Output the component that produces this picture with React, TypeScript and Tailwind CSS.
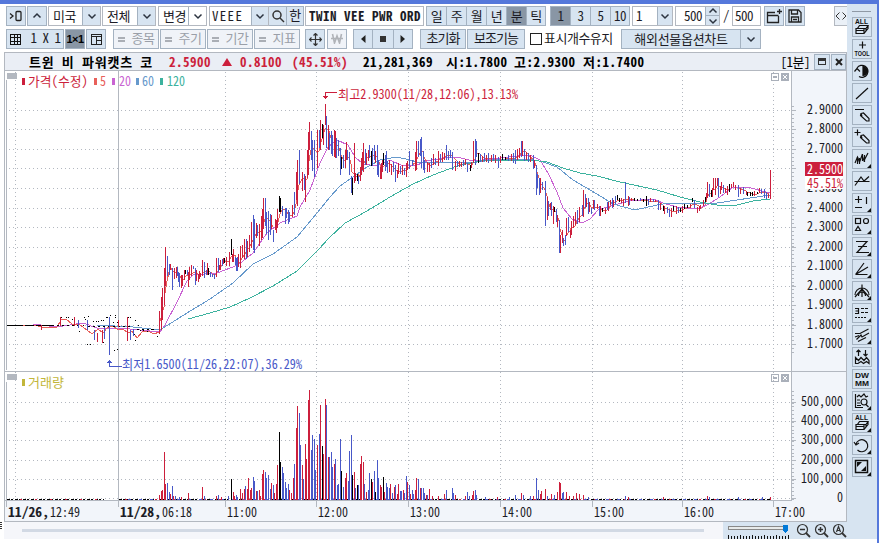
import type { ReactNode } from "react";

const UP = "#cc1f3c";
const DOWN = "#4858c8";
const FLAT = "#000000";
const GRID = "#b3b8c0";

type Tone = "u" | "d" | "f";
const tones: Record<Tone, string> = { u: UP, d: DOWN, f: FLAT };

/* x, high, low, tone (u = up, d = down, f = flat) */
const candleData = `
159 311 334 u,161 297 330 u,162 288 320 u,164 268 305 u,165 247 286 u,167 256 276 d,169 264 275 d,170 264 270 u,172 268 290 d,
174 268 279 u,176 267 278 u,177 267 276 d,178 272 282 d,179 273 287 d,181 275 288 u,182 275 286 u,184 270 280 u,185 270 274 f,
187 270 275 d,188 272 287 u,189 267 280 u,191 265 276 u,193 266 269 d,195 268 285 d,196 270 281 u,198 274 282 u,199 271 279 u,
200 273 277 u,202 260 276 u,204 262 278 d,206 270 275 d,207 263 275 u,208 268 275 f,210 272 277 d,212 274 277 d,214 274 279 d,
216 258 277 u,218 258 272 d,219 265 270 u,220 260 270 u,222 259 266 d,223 258 264 u,224 258 263 f,226 257 266 u,229 252 266 u,
231 239 255 f,232 254 262 u,233 249 262 u,235 257 265 d,236 258 271 d,237 257 271 d,238 254 267 u,240 246 268 u,242 245 258 u,
244 239 259 u,246 239 259 d,247 241 257 u,249 235 252 u,251 222 248 u,253 215 250 d,254 219 253 d,256 223 238 u,257 225 236 d,
259 224 246 u,261 216 240 u,262 209 238 u,263 198 229 u,265 198 226 d,266 212 234 d,268 211 240 d,270 214 235 d,271 215 229 u,
273 230 242 d,275 219 230 u,276 220 233 u,277 209 228 u,279 196 212 f,280 198 212 f,282 206 216 d,285 208 224 d,286 208 218 d,
288 210 224 d,289 212 222 d,292 205 217 u,294 192 215 d,296 172 200 u,297 160 206 u,299 150 184 d,302 172 191 u,304 174 190 d,
305 176 202 u,307 150 178 u,308 132 175 u,309 122 150 u,311 131 160 d,312 140 171 d,314 140 177 d,317 130 168 u,319 130 148 d,
320 120 150 u,322 124 138 f,323 125 145 u,325 104 125 u,326 116 148 d,328 125 150 u,329 133 150 d,331 131 154 d,332 135 156 d,
334 130 157 u,335 131 158 u,336 138 158 d,338 140 156 d,340 148 175 d,341 157 169 f,343 155 168 d,345 150 168 u,346 142 160 u,
347 150 160 d,349 152 175 d,351 176 193 d,352 178 195 f,354 143 183 u,355 173 181 u,357 174 181 f,358 176 184 d,360 167 181 u,
361 158 175 u,362 152 170 u,363 143 172 u,365 149 165 d,366 153 165 u,368 150 161 u,369 145 158 d,371 151 166 f,372 148 166 d,
374 145 160 d,375 151 163 u,377 145 175 d,378 160 177 d,380 167 179 u,381 163 179 u,382 160 172 u,383 153 165 f,385 155 171 d,
386 151 167 d,387 161 173 d,389 160 172 u,391 164 175 u,393 162 172 d,395 165 182 d,397 170 178 u,398 163 174 u,400 166 174 d,
402 165 175 u,404 168 175 d,406 163 177 u,407 161 170 u,409 151 169 d,412 160 166 d,415 152 171 u,416 141 170 u,418 141 157 d,
420 139 156 d,421 137 168 d,423 151 170 d,424 160 173 d,427 162 172 u,429 163 172 u,431 158 168 d,433 154 165 u,435 158 165 d,
438 151 166 u,440 154 162 d,442 152 162 u,444 153 160 u,446 145 160 d,448 151 160 d,450 150 158 d,452 152 170 d,455 161 171 u,
457 161 167 d,459 161 167 u,461 162 167 u,463 160 166 d,465 159 165 u,467 163 172 d,470 165 171 f,471 162 168 u,473 141 163 u,
475 139 165 d,476 141 157 d,478 153 163 f,480 154 162 d,482 156 162 u,484 153 161 d,486 155 162 u,488 153 163 d,491 155 162 u,
493 154 161 d,495 155 163 u,498 157 168 d,500 156 163 u,502 154 160 f,505 157 160 f,508 155 161 d,511 154 161 u,513 153 163 d,
515 150 164 d,517 149 160 u,519 148 158 u,521 141 157 d,522 141 156 u,524 149 161 d,526 152 160 u,528 153 162 d,530 155 162 u,
533 155 169 d,534 160 168 u,536 165 195 d,537 174 188 d,539 178 195 d,540 178 193 u,542 182 190 d,545 181 226 d,547 197 220 u,
548 201 216 d,550 203 210 u,551 202 216 d,553 206 224 u,554 207 212 f,556 209 222 d,557 215 227 u,559 220 253 d,560 235 253 u,
562 230 243 u,563 238 246 d,565 235 245 d,566 218 236 u,568 217 232 d,570 230 238 u,571 221 235 u,573 216 228 u,575 212 225 u,
577 210 224 d,579 207 222 u,582 205 216 d,583 190 217 u,585 194 208 d,586 198 207 u,588 198 214 d,589 202 212 u,591 208 214 d,
593 200 209 u,594 200 210 d,597 204 209 u,599 206 216 d,600 206 216 u,602 208 212 f,605 208 214 u,607 202 210 d,608 202 211 u,
610 200 205 u,612 198 208 d,613 200 207 u,615 196 204 d,617 195 200 f,619 198 202 f,621 198 203 u,623 199 206 u,625 182 203 d,
628 196 206 u,629 197 205 d,631 198 201 u,634 198 201 f,637 199 201 f,640 198 201 d,643 199 202 f,646 196 206 f,648 199 205 d,
650 198 202 u,653 199 202 d,655 200 202 u,658 200 210 d,660 203 210 u,663 206 211 f,664 206 214 u,667 207 213 d,669 209 217 d,
671 208 217 u,673 206 211 f,676 206 214 u,678 207 213 d,680 208 212 f,682 206 213 u,684 204 209 f,687 205 208 f,690 204 208 u,
692 198 202 f,694 200 208 d,697 207 213 u,699 206 211 u,700 205 209 u,703 200 206 u,705 197 202 f,706 193 200 u,707 182 198 u,
709 184 197 d,711 190 197 f,712 188 197 u,713 178 190 u,715 178 195 u,717 178 186 u,718 178 197 d,720 186 194 u,721 182 190 u,
723 185 193 d,725 188 193 u,727 186 195 u,729 184 192 f,731 184 188 u,733 182 187 u,735 185 190 u,738 185 197 d,740 188 194 u,
743 187 194 d,746 191 195 u,747 192 196 f,750 192 196 f,752 192 196 f,754 191 196 u,757 192 194 f,759 188 193 u,761 189 194 d,
764 189 198 d,766 192 199 d,768 194 198 u,770 170 199 u`;

const earlyCandles = `
41 325 330 u,60 317 326 u,74 317 326 u,78 320 328 d,87 320 330 d,94 330 340 d,97 333 342 u,102 330 343 u,104 327 339 d,
109 317 355 d,118 320 327 u,127 317 341 u,130 330 340 d,133 329 336 d`;

/* x, height, tone */
const volumeData = `
159 5 u,161 9 u,162 10 u,164 48 u,165 16 u,167 17 d,169 8 d,170 6 u,172 14 d,173 4 u,175 4 d,179 3 d,181 3 u,188 7 u,202 13 u,
204 4 d,216 4 u,218 5 d,221 3 u,228 4 d,231 21 f,233 8 u,234 4 u,236 5 d,237 3 d,240 11 u,242 7 u,244 11 u,245 14 d,247 11 u,248 22 u,
250 10 u,251 12 u,253 23 d,254 19 d,256 9 u,257 9 d,259 10 u,260 4 u,262 26 u,263 30 u,265 28 d,266 22 d,268 25 d,270 11 d,
271 17 u,273 15 d,274 7 u,276 16 u,277 35 u,279 68 f,280 38 f,282 33 d,283 27 d,285 18 d,286 12 d,288 16 d,289 10 u,291 7 u,
293 22 u,294 36 d,296 72 u,297 94 u,299 87 d,300 55 d,302 35 u,303 21 d,305 56 u,306 41 u,308 100 u,309 110 u,311 50 d,312 65 d,
314 61 d,315 30 d,317 55 u,319 66 d,320 95 u,322 54 f,323 46 u,325 101 u,326 95 d,328 43 u,329 43 d,331 48 d,332 33 d,334 36 u,
335 41 d,337 15 d,338 16 d,340 61 d,341 29 f,343 13 d,345 22 u,346 27 u,348 19 d,349 49 d,351 65 d,352 25 f,354 28 u,355 12 d,
357 15 f,358 15 d,360 36 u,361 44 u,363 38 u,364 16 d,366 8 u,368 10 d,369 27 d,371 21 f,372 18 u,374 29 d,375 8 f,377 40 d,
378 22 d,380 15 u,381 13 u,383 23 f,384 8 u,386 17 d,387 13 d,389 12 d,390 16 u,392 7 d,394 13 u,395 15 d,397 6 u,398 16 u,
400 9 d,401 9 d,403 10 u,404 7 d,406 24 d,407 18 u,409 15 d,410 6 u,412 10 d,413 6 d,415 10 u,416 22 u,418 21 d,420 12 u,
421 12 d,423 12 d,424 7 d,426 5 u,427 5 d,429 11 u,432 4 u,438 4 u,444 6 u,446 10 d,452 12 d,453 7 d,455 5 u,465 4 u,467 8 d,
469 4 d,472 5 u,473 9 u,475 10 d,476 5 d,485 3 d,497 3 u,509 3 d,515 5 d,521 7 u,523 5 d,530 4 d,533 4 u,536 22 d,538 10 d,
540 6 u,541 9 u,545 11 u,547 4 d,551 6 u,554 5 d,557 8 u,559 18 u,560 17 u,562 7 d,563 8 d,566 8 u,569 4 u,573 4 u,576 7 u,
579 6 u,583 5 u,588 3 d,625 4 d,628 3 u,663 3 u,707 4 u,709 3 d,738 3 d,762 3 d,770 3 u`;

const ma20 =
  "33,324 57,327 83,323 97,328 120,328 160,332 165,325 177,302 187,281 193,275 217,273 238,265 253,253 267,233 280,223 297,216 300,207 310,190 320,163 328,147 337,140 348,145 355,157 363,164 377,166 390,160 403,166 417,165 427,161 443,158 457,157 473,161 500,158 527,155 532,156 540,160 548,173 557,192 563,208 572,219 582,223 590,219 598,210 610,206 630,201 653,199 663,203 677,207 697,209 707,205 720,197 733,187 747,187 770,193";
const ma60 =
  "97,325 133,327 160,330 187,313 210,299 233,283 253,264 273,254 297,237 317,213 330,197 340,186 353,177 367,167 380,160 397,157 410,160 417,162 443,163 477,162 500,159 530,159 543,162 557,167 573,180 597,194 613,204 635,210 657,205 670,203 700,204 717,203 737,200 770,195";
const ma120 =
  "188,319 210,313 230,307 250,298 273,286 297,271 319,249 328,239 345,223 367,211 390,197 413,184 433,175 457,166 480,161 500,160 530,160 547,162 563,168 580,173 597,176 620,182 657,190 680,197 700,202 717,205 737,205 753,201 770,199";

const parse = (src: string) =>
  src
    .trim()
    .split(",")
    .map((row) => {
      const parts = row.trim().split(" ");
      return { n: parts.slice(0, -1).map(Number), tone: parts[parts.length - 1] as Tone };
    });

const candles = parse(candleData);
const early = parse(earlyCandles);
const volumes = parse(volumeData);

const ma5 = candles
  .map((c, i) => {
    const win = candles.slice(Math.max(0, i - 3), i + 1);
    const avg = win.reduce((s, w) => s + (w.n[1] + w.n[2]) / 2, 0) / win.length;
    return `${c.n[0]},${Math.round(avg)}`;
  })
  .join(" ");

const ma5Early =
  "7,325 38,326 46,328 57,327 61,320 66,319 72,324 80,325 87,330 92,334 98,329 103,333 107,328 113,326 118,330 123,329 128,333 132,331 137,338 142,332 148,331 154,334 159,332";

const priceGrid = [110, 129, 149, 168, 188, 208, 227, 247, 266, 286, 305, 325, 344];
const volumeGrid = [402, 421, 440, 460, 479, 498];
const timeGrid = [15, 225, 316, 408, 500, 592, 682, 773];

const priceLabels: [string, number][] = [
  ["2.9000", 114], ["2.8000", 133], ["2.7000", 153], ["2.5000", 192], ["2.4000", 212], ["2.3000", 231],
  ["2.2000", 251], ["2.1000", 270], ["2.0000", 290], ["1.9000", 309], ["1.8000", 329], ["1.7000", 348],
];
const volumeLabels: [string, number][] = [
  ["500,000", 406], ["400,000", 425], ["300,000", 444], ["200,000", 464], ["100,000", 483], ["0", 502],
];
const timeLabels: [string, number][] = [
  ["11:00", 227], ["12:00", 318], ["13:00", 410], ["14:00", 502], ["15:00", 594], ["16:00", 684], ["17:00", 775],
];

/* session dots around the previous close */
const closeDots: [number, number][] = [
  [61, 317], [66, 317], [68, 317], [72, 319], [84, 317], [85, 319], [88, 316], [93, 321], [96, 321], [98, 321],
  [101, 320], [103, 320], [106, 317], [107, 317], [110, 315], [115, 315], [115, 317], [113, 322], [117, 322],
  [128, 317], [130, 317], [135, 320], [138, 325], [134, 334], [135, 340], [87, 344], [90, 344], [103, 342],
  [114, 350], [117, 349], [79, 331], [83, 325], [140, 330], [143, 330], [147, 331], [151, 329], [157, 336],
];

interface LabelProps {
  x: number;
  y: number;
  w?: number;
  fill?: string;
  bold?: boolean;
  size?: number;
  children: string;
}

function Label({ x, y, w, fill = "#1c1c26", bold, size = 13, children }: LabelProps) {
  return (
    <text
      x={x}
      y={y}
      fill={fill}
      fontSize={size}
      fontWeight={bold ? 700 : 400}
      textLength={w ?? children.length * 6}
      lengthAdjust="spacingAndGlyphs"
    >
      {children}
    </text>
  );
}

function PaneButtons({ y }: { y: number }) {
  return (
    <g fill="none" stroke="#aab0ba">
      <rect x="771.5" y={y + 0.5} width="7" height="7" />
      <rect x="773" y={y + 3} width="4" height="2" fill="#aab0ba" stroke="none" />
      <rect x="781" y={y} width="8" height="8" fill="#aab0ba" stroke="none" />
      <path d={`M783 ${y + 2}l4 4m0-4l-4 4`} stroke="#fff" />
    </g>
  );
}

function Chart() {
  const minor = (from: number, to: number, step: number) => {
    const out: number[] = [];
    for (let y = from; y <= to; y += step) out.push(Math.round(y));
    return out;
  };

  return (
    <svg className="block h-[451px] w-[843px]" viewBox="4 71 843 451" shapeRendering="crispEdges">
      <rect x="4" y="71" width="843" height="451" fill="#f2f5fa" />
      <rect x="5" y="71" width="786" height="429" fill="#fff" />

      <g stroke={GRID} strokeDasharray="1 3">
        {priceGrid.concat(volumeGrid).map((y) => (
          <line key={y} x1="9" x2="790" y1={y + 0.5} y2={y + 0.5} />
        ))}
        {timeGrid.map((x) => (
          <line key={x} x1={x + 0.5} x2={x + 0.5} y1="72" y2="500" />
        ))}
      </g>

      <g fill={GRID}>
        <rect x="4" y="71" width="1" height="451" />
        <rect x="6" y="80" width="1" height="290" />
        <rect x="6" y="382" width="1" height="118" />
        <rect x="118" y="71" width="1" height="429" />
        <rect x="791" y="71" width="1" height="430" />
        <rect x="846" y="71" width="1" height="451" />
        <rect x="4" y="371" width="843" height="1" />
        <rect x="4" y="500" width="788" height="1" />
        <rect x="4" y="521" width="843" height="1" />
        <rect x="7" y="73" width="10" height="6" />
        <rect x="7" y="374" width="10" height="6" />
        {priceGrid.concat(volumeGrid).map((y) => (
          <rect key={y} x="791" y={y} width="5" height="1" />
        ))}
        {minor(106, 352, 3.9).concat(minor(391, 500, 3.85)).map((y) => (
          <rect key={y} x="791" y={y} width="3" height="1" />
        ))}
        {[6, 118, ...timeGrid.slice(1)].map((x) => (
          <rect key={x} x={x} y="501" width="1" height="6" />
        ))}
      </g>

      {/* price */}
      <g fill="none">
        <polyline points={ma5} stroke="#e8605a" />
        <polyline points={ma20} stroke="#c964d2" />
        <polyline points={ma60} stroke="#6699cc" />
        <polyline points={ma120} stroke="#3cb29e" />
        <polyline points={ma5Early} stroke="#e8605a" />
      </g>
      <path d="M7 325.5h16M25 325.5h9M36 325.5h16" stroke="#000" />
      <path d="M52 325.5h30M137 329.5h20M88 326.5h44" stroke="#000" strokeDasharray="2 3" />
      {closeDots.map(([x, y]) => (
        <rect key={`${x}-${y}`} x={x} y={y} width="1" height="1" />
      ))}
      {early.concat(candles).map((c, i) => (
        <rect key={i} x={c.n[0]} y={c.n[1]} width="1" height={c.n[2] - c.n[1]} fill={tones[c.tone]} />
      ))}

      {/* volume */}
      <path d="M7 499.5h97M119 499.5h652" stroke="#000" strokeDasharray="3 1 2 2" />
      <path d="M20 499.5h84M125 499.5h34M174 499.5h597" stroke={UP} strokeDasharray="2 13" />
      <path d="M128 499.5h32M177 499.5h594" stroke={DOWN} strokeDasharray="3 8" />
      {volumes.map((v, i) => (
        <rect key={i} x={v.n[0]} y={500 - v.n[1]} width="1" height={v.n[1]} fill={tones[v.tone]} />
      ))}

      <path d="M325.500 97v-4.500h11" fill="none" stroke={UP} />
      <path d="M323 96h5v1h-1v1h-1v1h-1v-1h-1v-1h-1z" fill={UP} />
      <Label x={338} y={99} w={180} fill={UP}>최고2.9300(11/28,12:06),13.13%</Label>
      <path d="M109.500 361v5.500h12" fill="none" stroke={DOWN} />
      <path d="M107 363h5v-1h-1v-1h-1v-1h-1v1h-1v1h-1z" fill={DOWN} />
      <Label x={122} y={369} w={180} fill={DOWN}>최저1.6500(11/26,22:07),36.29%</Label>

      {/* legends */}
      <rect x="22" y="78" width="3" height="7" fill={UP} />
      <Label x={28} y={86} w={60} fill={UP}>가격(수정)</Label>
      <rect x="94" y="78" width="3" height="7" fill="#e8605a" />
      <Label x={100} y={86} fill="#e8605a">5</Label>
      <rect x="112" y="78" width="3" height="7" fill="#c964d2" />
      <Label x={119} y={86} fill="#c964d2">20</Label>
      <rect x="136" y="78" width="3" height="7" fill="#6699cc" />
      <Label x={142} y={86} fill="#6699cc">60</Label>
      <rect x="160" y="78" width="3" height="7" fill="#3cb29e" />
      <Label x={167} y={86} fill="#3cb29e">120</Label>
      <rect x="22" y="379" width="3" height="7" fill="#c2b63a" />
      <Label x={28} y={387} w={36} fill="#c2b63a">거래량</Label>
      <PaneButtons y={73} />
      <PaneButtons y={374} />

      {/* scales */}
      {priceLabels.concat(volumeLabels).map(([t, y]) => (
        <Label key={t} x={843 - t.length * 6} y={y}>{t}</Label>
      ))}
      <rect x="805" y="162" width="38" height="14" fill={UP} />
      <Label x={807} y={174} fill="#fff">2.5900</Label>
      <rect x="805" y="176" width="38" height="13" fill="#fff" />
      <Label x={807} y={188} fill={UP}>45.51%</Label>

      <Label x={8} y={517} w={41} bold>11/26,</Label>
      <Label x={50} y={517}>12:49</Label>
      <Label x={120} y={517} w={41} bold>11/28,</Label>
      <Label x={162} y={517}>06:18</Label>
      {timeLabels.map(([t, x]) => (
        <Label key={t} x={x} y={517}>{t}</Label>
      ))}
    </svg>
  );
}

function Box({ className = "", children }: { className?: string; children?: ReactNode }) {
  return (
    <div className={`flex h-5 shrink-0 items-center justify-center border border-[#a4b2c1] ${className}`}>
      {children}
    </div>
  );
}

function Chevron({ up }: { up?: boolean }) {
  return (
    <svg className="h-2 w-2.5" viewBox="0 0 10 8" fill="none" stroke="#2c3440" strokeWidth="1.5">
      <path d={up ? "M1.500 5.500L5 2l3.500 3.500" : "M1.500 2.500L5 6l3.500-3.500"} />
    </svg>
  );
}

function Select({ label, className, arrow = "bg-[#d7e4f1]" }: { label: string; className: string; arrow?: string }) {
  return (
    <div className={`flex h-5 shrink-0 border border-[#b3b8c0] bg-white ${className}`}>
      <span className="flex-1 pl-1 leading-[17px]">{label}</span>
      <span className={`flex w-[18px] items-center justify-center border-l border-[#a4b2c1] ${arrow}`}>
        <Chevron />
      </span>
    </div>
  );
}

const periods = ["일", "주", "월", "년", "분", "틱"];
const minutes = ["1", "3", "5", "10"];

function Segments({ items, active }: { items: string[]; active: string }) {
  return (
    <div className="flex h-5 shrink-0 border border-[#a4b2c1]">
      {items.map((t, i) => (
        <span
          key={t}
          className={`text-center leading-[17px] ${i === 0 ? "w-[19px]" : "border-l border-[#a4b2c1]"} ${
            i === items.length - 1 ? "w-[19px]" : i > 0 ? "w-5" : ""
          } ${t === active ? "bg-[#8996a5]" : "bg-[#d7e4f1]"}`}
        >
          {t}
        </span>
      ))}
    </div>
  );
}

function TopRow() {
  return (
    <div className="flex h-5 pl-1.5">
      <Box className="w-5 bg-[#d7e4f1]">
        <svg className="h-3.5 w-4" viewBox="0 0 16 14" fill="none" stroke="#222" strokeWidth="1.300">
          <path d="M2 4.500L5 7 2 9.500" />
          <rect x="8" y="2.500" width="5" height="9" rx="1" />
        </svg>
      </Box>
      <Box className="ml-px w-5 bg-[#d7e4f1]"><Chevron up /></Box>
      <Select label="미국" className="ml-px w-[53px]" />
      <Select label="전체" className="ml-px w-[54px]" />
      <Select label="변경" className="ml-0.5 w-[49px]" arrow="bg-white" />
      <div className="ml-0.5 flex h-5 w-[60px] border border-[#b3b8c0] bg-white">
        <span className="flex-1 pl-0.5 leading-[17px] tracking-[1.300px]">VEEE</span>
        <span className="flex w-[17px] items-center justify-center border-l border-[#a4b2c1] bg-[#d7e4f1]">
          <Chevron />
        </span>
      </div>
      <Box className="w-[18px] border-l-0 bg-[#d7e4f1]">
        <svg className="h-3.5 w-3.5" viewBox="0 0 14 14" fill="none" stroke="#333" strokeWidth="1.500">
          <circle cx="6" cy="6" r="4" />
          <path d="M9 9l4 4" />
        </svg>
      </Box>
      <Box className="w-[17px] border-l-0 bg-[#d7e4f1] pb-0.5">한</Box>
      <div className="ml-px h-5 w-[119px] shrink-0 border border-[#b3b8c0] bg-white pl-[3px] leading-[17px] font-bold tracking-[0.5px] whitespace-nowrap">
        TWIN VEE PWR ORD
      </div>
      <div className="ml-0.5 flex">
        <Segments items={periods} active="분" />
      </div>
      <div className="ml-1 flex">
        <Segments items={minutes} active="1" />
      </div>
      <div className="ml-0.5 flex h-5 w-[41px] border border-[#b3b8c0] bg-white">
        <span className="flex-1 pl-[3px] leading-[17px]">1</span>
        <span className="flex w-[15px] items-center justify-center border-l border-[#a4b2c1] bg-[#d7e4f1]">
          <Chevron />
        </span>
      </div>
      <div className="ml-0.5 flex h-5 w-[45px] border border-[#b3b8c0] bg-white">
        <span className="flex-1 pr-[3px] text-right leading-[17px]">500</span>
        <span className="flex w-[14px] flex-col items-center justify-around border-l border-[#a4b2c1] bg-[#d7e4f1]">
          <Chevron up />
          <span className="h-px w-full bg-[#a4b2c1]" />
          <Chevron />
        </span>
      </div>
      <span className="w-3 text-center leading-[17px]">/</span>
      <div className="h-5 w-[29px] border border-[#b3b8c0] bg-white pl-0.5 leading-[17px]">500</div>
      <Box className="ml-[3px] w-5 bg-[#d7e4f1]">
        <svg className="h-4 w-4" viewBox="0 0 16 16" fill="none" stroke="#222" strokeWidth="1.300">
          <path d="M9 4.500H1.500v10h11V8M1.500 7.500h11M13.500 1v5M11 3.500h5" />
        </svg>
      </Box>
      <Box className="ml-px w-5 bg-[#d7e4f1]">
        <svg className="h-4 w-4" viewBox="0 0 16 16" fill="none" stroke="#222" strokeWidth="1.300">
          <path d="M2 2h9.500L14 4.500V14H2zM4.500 2v4h6V2M4.500 14V9h7v5M6 11.500h4" />
        </svg>
      </Box>
      <div className="ml-[29px] flex h-5 w-[13px] items-center border border-r-0 border-[#b3b8c0] bg-[#eaf0f7]">
        <svg className="h-3 w-3" viewBox="0 0 12 12" fill="none" stroke="#333">
          <path d="M4.500 2.500L1 6l3.500 3.500M7.500 2.500L11 6 7.500 9.500" />
        </svg>
      </div>
    </div>
  );
}

function SecondRow() {
  return (
    <div className="mt-[3px] flex h-5 pl-1.5">
      <Box className="w-[58px] gap-2.5 bg-[#d7e4f1]">
        <svg className="h-[11px] w-[11px]" viewBox="0 0 11 11" shapeRendering="crispEdges" stroke="#111" fill="none">
          <path d="M.5.500h10v10H.5zM4 .500v10M7 .500v10M.5 3.500h10M.5 7.500h10" />
        </svg>
        <span className="pb-0.5 whitespace-pre tracking-[-0.5px]">1 X 1</span>
      </Box>
      <Box className="ml-px w-5 border-[#8996a5] bg-[#8996a5] font-['Liberation_Sans',sans-serif] text-[11px] font-bold tracking-[-0.5px] text-black">
        1×1
      </Box>
      <Box className="ml-px w-5 bg-[#d7e4f1]">
        <svg className="h-[11px] w-[11px]" viewBox="0 0 11 11" shapeRendering="crispEdges" stroke="#222" fill="none">
          <path d="M.5.500h10v10H.5zM.5 2.500h10M5.500 2.500v8M5.500 6.500h5" />
        </svg>
      </Box>
      <div className="ml-[7px] flex gap-px text-[#9a9fa8]">
        {["종목", "주기", "기간", "지표"].map((t) => (
          <Box key={t} className="w-[46px] gap-[7px] border-[#9a9fa8] bg-[#f0f3f8]">
            <span className="h-[5px] w-[7px] border-y-2 border-[#aaaeb5]" />
            <span className="pb-0.5 whitespace-nowrap tracking-[-0.5px]">{t}</span>
          </Box>
        ))}
      </div>
      <Box className="ml-[5px] w-5 bg-[#d7e4f1]">
        <svg className="h-[13px] w-[13px]" viewBox="0 0 13 13" fill="none" stroke="#333" strokeWidth="1.200">
          <path d="M6.500.500v12M.5 6.500h12M4.500 2.500l2-2 2 2M4.500 10.500l2 2 2-2M2.500 4.500l-2 2 2 2M10.500 4.500l2 2-2 2" />
        </svg>
      </Box>
      <Box className="ml-0.5 w-5 border-[#9a9fa8] bg-[#f0f3f8] pb-0.5">
        <svg className="h-[11px] w-3" viewBox="0 0 12 11" fill="none" stroke="#b0b3b8" strokeWidth="1.600">
          <path d="M1.500 1l2 9L6 3l2.500 7 2-9M0 5.500h12" />
        </svg>
      </Box>
      <div className="ml-1.5 flex">
        <Box className="w-5 bg-[#d7e4f1]">
          <svg className="h-2 w-1.5" viewBox="0 0 6 8"><path d="M5.500 0v8L1 4z" fill="#222" /></svg>
        </Box>
        <Box className="w-5 border-x-0 bg-[#d7e4f1]"><span className="h-1.5 w-1.5 bg-[#333]" /></Box>
        <Box className="w-5 bg-[#d7e4f1]">
          <svg className="h-2 w-1.5" viewBox="0 0 6 8"><path d="M.5 0v8L5 4z" fill="#222" /></svg>
        </Box>
      </div>
      <Box className="ml-[7px] w-[46px] bg-[#d7e4f1] pb-0.5 tracking-[-1px]">초기화</Box>
      <Box className="ml-px w-[58px] bg-[#d7e4f1] pb-0.5 tracking-[-1px]">보조기능</Box>
      <span className="mt-1 ml-[5px] h-3 w-3 border border-[#222] bg-white" />
      <span className="ml-0.5 w-[79px] leading-[17px] tracking-[-0.5px] whitespace-nowrap">표시개수유지</span>
      <div className="-ml-0.5 flex h-5 w-[140px] border border-[#a4b2c1] bg-[#d7e4f1]">
        <span className="flex-1 text-center leading-[17px] tracking-[-0.3px] whitespace-nowrap">해외선물옵션차트</span>
        <span className="flex w-5 items-center justify-center border-l border-[#a4b2c1]"><Chevron /></span>
      </div>
    </div>
  );
}

function QuoteBar() {
  return (
    <div className="mt-[3px] ml-1 flex h-[19px] items-center border border-[#b3b8c0] bg-[#eaeef5] pl-6 text-black">
      <div className="flex items-center font-bold tracking-[0.5px] whitespace-nowrap">
        <span className="w-[140px] tracking-[0.8px]">트윈 비 파워캣츠 코</span>
        <span className="w-[53px] text-[#cc1f3c]">2.5900</span>
        <svg className="h-2 w-2.5" viewBox="0 0 10 8"><path d="M5 0l5 8H0z" fill={UP} /></svg>
        <span className="ml-2 w-[52px] text-[#cc1f3c]">0.8100</span>
        <span className="w-[71px] text-[#cc1f3c]">(45.51%)</span>
        <span className="w-[83px]">21,281,369</span>
        <span className="w-[68px]">시:1.7800</span>
        <span className="w-[69px]">고:2.9300</span>
        <span className="w-[68px]">저:1.7400</span>
      </div>
      <span className="mr-1 ml-auto tracking-[-0.5px]">[1분]</span>
      <Box className="h-4! w-4 bg-[#d7e4f1]">
        <span className="h-[7px] w-2 border border-t-[3px] border-[#333]" />
      </Box>
      <Box className="ml-px h-4! w-[15px] bg-[#d7e4f1]">
        <svg className="h-2 w-2" viewBox="0 0 8 8" stroke="#222" strokeWidth="2"><path d="M1 1l6 6M7 1L1 7" /></svg>
      </Box>
    </div>
  );
}

function Caption({ x, y, w, size = 6.5, children }: { x: number; y: number; w: number; size?: number; children: string }) {
  return (
    <text
      x={x}
      y={y}
      fontSize={size}
      fontWeight="700"
      fontFamily="'Liberation Sans', sans-serif"
      fill="#111"
      stroke="none"
      letterSpacing="0"
      textLength={w}
      lengthAdjust="spacingAndGlyphs"
    >
      {children}
    </text>
  );
}

/* 18x18 tool drawings; corner marks a tool with a drop-down */
const stack = (
  <>
    <Caption x={2} y={6} w={13}>ALL</Caption>
    <path d="M6.500 7.500h8.500l-2 3H4.500zM15 7.500v3l-2 2.500M4.500 10.500H3v5h8v-5M3 12.500h8M13 10.500v2.500l-2 2.500" />
  </>
);

const tools: { art: ReactNode; corner?: boolean }[] = [
  { art: stack },
  {
    art: (
      <>
        <path d="M9.500 1.500v7M6 5h7" />
        <Caption x={1.5} y={15.5} w={15}>TOOL</Caption>
      </>
    ),
  },
  {
    art: (
      <>
        <path d="M4 6A6 6 0 1 1 6 14.500M1.500 9.500L4 6.500l3 3" />
        <path d="M10 4.500a4.500 4.500 0 0 1 0 9z" fill="#111" />
      </>
    ),
  },
  { art: <path d="M3 15L15 4" /> },
  { art: <path d="M2 3.500h9M8 7.500l2.500-.5L16 12.500v2.500h-2.500L7.500 9.500zM8 7.500l1 2.500" /> },
  { art: <path d="M1.500 4.500h6M4.500 1.500v6M8 7.500l2.500-.5L16 12.500v2.500h-2.500L7.500 9.500zM8 7.500l1 2.500" /> },
  {
    art: (
      <>
        <path d="M2 13l2.500-6 2 5L9 5.500l2 5L15 3" />
        <path d="M4.500 7v7M6.500 8v6M9.500 4v7M11.500 5v7" />
      </>
    ),
    corner: true,
  },
  { art: <path d="M1.500 9.500h15M2 13.500L8 5l3 4 5-4.500" /> },
  { art: <path d="M2 5.500h7M5.500 2v7M2 13.500h7M13.500 3v7" />, corner: true },
  {
    art: (
      <>
        <rect x="2.500" y="2.500" width="5" height="5" />
        <circle cx="13" cy="5" r="2.500" />
        <path d="M2.500 14.500l2.500-4 2.500 4z" />
      </>
    ),
    corner: true,
  },
  { art: <path d="M3 3.500h11L4 14.500h12M5 8.500h9" />, corner: true },
  { art: <path d="M2.500 14.500L11 3M2.500 14.500L15 7M2.500 14.500h12" />, corner: true },
  { art: <path d="M2 13a7 7 0 0 1 14 0M5.500 14a3.500 4 0 0 1 7 0M9 2.500V15M2 15l7-8 7 8" />, corner: true },
  {
    art: (
      <>
        <path d="M2 4.500h3.500v5H2M2.500 7H5" />
        <path d="M8 4.500h8M8 8.500h8" strokeDasharray="3 1" />
        <path d="M2 13.500h12" strokeDasharray="2 1" />
      </>
    ),
    corner: true,
  },
  { art: <path d="M2 7.500h5L15.500 3M3.500 13.500L8 9l1 2 7-4M5 15.500l5-2.500 3-1.500M2 11l4-1.500" />, corner: true },
  {
    art: (
      <path d="M2.500 15.500v-6l3 3 2.500-3 3 3 2.500-3 2.500 3v3l-2.500-2-3 2-2.500-2-3 2zM5.500 8V2M3.500 4l2-2 2 2M12.500 2v6M10.500 6l2 2 2-2" />
    ),
  },
  {
    art: (
      <>
        <Caption x={2} y={8} w={14} size={8}>DW</Caption>
        <Caption x={2} y={16} w={14} size={8}>MM</Caption>
      </>
    ),
  },
  {
    art: (
      <>
        <path d="M2.500 2v13.500H10M4 5l2-2 2 2 3-3 2 3 2-1M4 8h3M4 11h3M4 13.500h4" />
        <circle cx="11" cy="10" r="3" />
        <path d="M13 12.500l2.500 2.500" />
      </>
    ),
    corner: true,
  },
  { art: stack, corner: true },
  { art: <path d="M4.500 14a6 6 0 1 0-1.500-6M1 6l2 3 3-2" />, corner: true },
  {
    art: (
      <>
        <rect x="2.500" y="2.500" width="12" height="12" strokeWidth="1.500" />
        <path d="M4 4h5L4 9zM13 13H8l5-5z" fill="#111" stroke="none" />
      </>
    ),
    corner: true,
  },
];

function ToolRail() {
  return (
    <aside className="w-[30px] bg-[#d7e4f1] pl-[5px]">
      <div className="mt-[7px] mb-[5px] h-px w-[19px] bg-[#8f99a5]" />
      <div className="flex flex-col gap-0.5">
        {tools.map((tool, i) => (
          <Box key={i} className="w-5">
            <svg
              className="h-[18px] w-[18px] overflow-visible"
              viewBox="0 0 18 18"
              fill="none"
              stroke="#111"
              strokeWidth="1.200"
            >
              {tool.art}
              {tool.corner && <path d="M18 14v4h-4z" fill="#111" stroke="none" />}
            </svg>
          </Box>
        ))}
      </div>
    </aside>
  );
}

function ZoomButton({ kind }: { kind: "out" | "in" | "auto" }) {
  return (
    <svg className="h-[15px] w-[15px]" viewBox="0 0 15 15" fill="none" stroke="#333" strokeWidth="1.200">
      <circle cx="6.500" cy="6.500" r="5" />
      <path d="M10 10l4 4" strokeWidth="1.800" />
      {kind !== "auto" && <path d="M4 6.500h5" strokeWidth="1.500" />}
      {kind === "in" && <path d="M6.500 4v5" strokeWidth="1.500" />}
      {kind === "auto" && <path d="M4.500 9l2-5.500 2 5.500M5 7.500h3" />}
    </svg>
  );
}

function ScrollRow() {
  return (
    <div className="flex h-[17px]">
      <div className="w-1 shrink-0">
        <div className="h-[7px] w-0.5 bg-[repeating-linear-gradient(#333_0_1px,transparent_1px_2px)]" />
      </div>
      <div className="w-[719px] bg-[#f5f6fa] pt-[7px] pl-[18px]">
        <div className="h-[3px] w-[682px] bg-[#d2d9e4]" />
      </div>
      <div className="flex w-[124px] bg-[#d7e4f1] pl-[5px]">
        <svg className="h-[17px] w-[62px] shrink-0" viewBox="0 0 62 17" shapeRendering="crispEdges">
          <rect x=".5" y="4.500" width="59" height="3" fill="#e7eaea" stroke="#888" />
          <path d="M55 3h5v6l-2.500 2L55 9z" fill="#0078d7" />
          <path d="M0 15.500h61" stroke="#111" strokeWidth="3" strokeDasharray="1 2" />
          <path d="M.5 13v4M12.500 13v4M24.500 13v4M36.500 13v4M48.500 13v4M60.500 13v4" stroke="#111" />
        </svg>
        <div className="ml-[6px] flex gap-[3px] pt-px">
          <ZoomButton kind="out" />
          <ZoomButton kind="in" />
          <ZoomButton kind="auto" />
        </div>
      </div>
    </div>
  );
}

export default function App() {
  return (
    <div className="h-[543px] w-[879px] overflow-hidden border-t-4 border-r-2 border-[#5578db] bg-white font-['Noto_Sans_Mono_CJK_KR','Noto_Sans_CJK_KR',sans-serif] text-[13px] tracking-[-0.5px] text-[#1c1c26]">
      <div className="flex h-[535px]">
        <main className="w-[847px] pt-0.5">
          <TopRow />
          <SecondRow />
          <QuoteBar />
          <div className="ml-1 h-[451px] tracking-normal">
            <Chart />
          </div>
          <ScrollRow />
        </main>
        <ToolRail />
      </div>
    </div>
  );
}
